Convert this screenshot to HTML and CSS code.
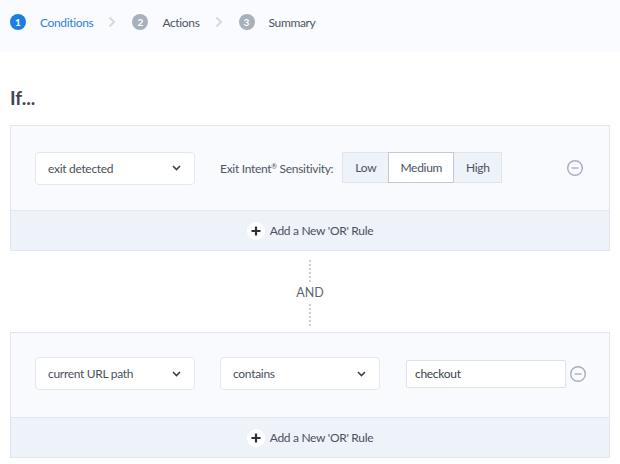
FILE: index.html
```html
<!DOCTYPE html>
<html>
<head>
<meta charset="utf-8">
<link rel="stylesheet" href="styles.css">
</head>
<body>
<div class="topbar">
  <div class="step active"><span class="num">1</span><span class="label">Conditions</span></div>
  <svg class="chev" width="8" height="12" viewBox="0 0 8 12"><path d="M1.5 1.5 L6 6 L1.5 10.5" fill="none" stroke="#d3d9e2" stroke-width="2"/></svg>
  <div class="step"><span class="num">2</span><span class="label">Actions</span></div>
  <svg class="chev" width="8" height="12" viewBox="0 0 8 12"><path d="M1.5 1.5 L6 6 L1.5 10.5" fill="none" stroke="#d3d9e2" stroke-width="2"/></svg>
  <div class="step"><span class="num">3</span><span class="label">Summary</span></div>
</div>

<div class="content">
  <h2 class="if">If...</h2>

  <div class="panel">
    <div class="panel-body">
      <div class="select"><span>exit detected</span>
        <svg width="9" height="6" viewBox="0 0 9 6"><path d="M1 1 L4.5 4.5 L8 1" fill="none" stroke="#3a3f48" stroke-width="1.6"/></svg>
      </div>
      <span class="sens-label">Exit Intent<sup>®</sup> Sensitivity:</span>
      <div class="btn-group">
        <span class="btn low">Low</span>
        <span class="btn medium">Medium</span>
        <span class="btn high">High</span>
      </div>
      <svg class="remove" width="18" height="18" viewBox="0 0 18 18"><circle cx="9" cy="9" r="7.3" fill="none" stroke="#a7afbd" stroke-width="1.4"/><path d="M5.5 9 H12.5" stroke="#a7afbd" stroke-width="1.4"/></svg>
    </div>
    <div class="panel-foot">
      <span class="plus"><svg width="10" height="10" viewBox="0 0 10 10"><path d="M5 0.5 V9.5 M0.5 5 H9.5" stroke="#2c313a" stroke-width="2.2"/></svg></span>
      <span class="add-text">Add a New 'OR' Rule</span>
    </div>
  </div>

  <div class="and">
    <span class="dots"></span>
    <span class="and-text">AND</span>
    <span class="dots"></span>
  </div>

  <div class="panel">
    <div class="panel-body second-body">
      <div class="select"><span>current URL path</span>
        <svg width="9" height="6" viewBox="0 0 9 6"><path d="M1 1 L4.5 4.5 L8 1" fill="none" stroke="#3a3f48" stroke-width="1.6"/></svg>
      </div>
      <div class="select second"><span>contains</span>
        <svg width="9" height="6" viewBox="0 0 9 6"><path d="M1 1 L4.5 4.5 L8 1" fill="none" stroke="#3a3f48" stroke-width="1.6"/></svg>
      </div>
      <div class="input">checkout</div>
      <svg class="remove2" width="18" height="18" viewBox="0 0 18 18"><circle cx="9" cy="9" r="7.3" fill="none" stroke="#a7afbd" stroke-width="1.4"/><path d="M5.5 9 H12.5" stroke="#a7afbd" stroke-width="1.4"/></svg>
    </div>
    <div class="panel-foot">
      <span class="plus"><svg width="10" height="10" viewBox="0 0 10 10"><path d="M5 0.5 V9.5 M0.5 5 H9.5" stroke="#2c313a" stroke-width="2.2"/></svg></span>
      <span class="add-text">Add a New 'OR' Rule</span>
    </div>
  </div>
</div>
</body>
</html>
```

FILE: styles.css
```css
* { box-sizing: border-box; }
body {
  margin: 0;
  background: #ffffff;
  font-family: Lato, "Open Sans", sans-serif;
  font-size: 12px;
  letter-spacing: -0.3px;
  color: #4a5260;
}
.topbar {
  height: 52px;
  background: #f9fbfe;
  display: flex;
  align-items: center;
  padding: 0 0 8px 10px;
}
.step {
  display: flex;
  align-items: center;
}
.num {
  width: 16px;
  height: 16px;
  border-radius: 50%;
  background: #a9b0bd;
  color: #fff;
  font-size: 10px;
  letter-spacing: 0;
  font-weight: 700;
  display: flex;
  align-items: center;
  justify-content: center;
}
.step.active .num { background: #1a7fe0; }
.label {
  margin-left: 14px;
  color: #4d5563;
  font-size: 12px;
  letter-spacing: -0.35px;
}
.step.active .label { color: #2e82d9; }
.chev { margin: 0 16px 0 15px; }
.content {
  padding: 0 10px;
}
.if {
  margin: 34px 0 0 0;
  height: 39px;
  font-size: 19px;
  line-height: 24px;
  font-weight: 700;
  letter-spacing: 0;
  color: #3f4552;
}
.panel {
  border: 1px solid #e1e6ef;
}
.panel-body {
  height: 84px;
  background: #f8fafe;
  display: flex;
  align-items: center;
  padding: 0 0 0 24px;
}
.second-body { padding-bottom: 3px; }
.select {
  width: 160px;
  height: 33px;
  background: #fff;
  border: 1px solid #e3e8ef;
  border-radius: 4px;
  display: flex;
  align-items: center;
  justify-content: space-between;
  padding: 0 13px 0 12px;
  color: #4a4f5a;
}
.select.second { margin-left: 25px; }
.sens-label {
  margin-left: 25px;
  color: #4f5662;
}
.sens-label sup {
  font-size: 7px;
  vertical-align: 4px;
  line-height: 0;
}
.btn-group {
  margin-left: 9px;
  display: flex;
  height: 31px;
  margin-top: -2px;
}
.btn {
  display: flex;
  align-items: center;
  justify-content: center;
  background: #eef2f9;
  border: 1px solid #dfe4ed;
  color: #4a5260;
}
.low { width: 46px; border-right: none; }
.medium { width: 66px; background: #fff; border-color: #c3cad5; }
.high { width: 48px; border-left: none; }
.remove { margin-left: auto; margin-right: 25px; }
.input {
  margin-left: 26px;
  width: 160px;
  height: 28px;
  background: #fff;
  border: 1px solid #dde3ec;
  border-radius: 2px;
  display: flex;
  align-items: center;
  padding-left: 8px;
  color: #3a3f48;
}
.remove2 { margin-left: 3px; }
.panel-foot {
  height: 40px;
  background: #eef2f9;
  border-top: 1px solid #e1e6ef;
  display: flex;
  align-items: center;
  justify-content: center;
}
.plus {
  width: 18px;
  height: 18px;
  border-radius: 50%;
  background: #fff;
  display: flex;
  align-items: center;
  justify-content: center;
}
.add-text {
  margin-left: 5px;
  color: #4a5260;
}
.and {
  height: 81px;
  display: flex;
  flex-direction: column;
  align-items: center;
  padding-top: 9px;
}
.dots {
  width: 0;
  height: 22px;
  border-left: 2px dotted #c9d0da;
}
.and-text {
  margin: 4px 0;
  line-height: 14px;
  color: #5d6572;
  font-size: 12.5px;
  letter-spacing: 0;
}
```
